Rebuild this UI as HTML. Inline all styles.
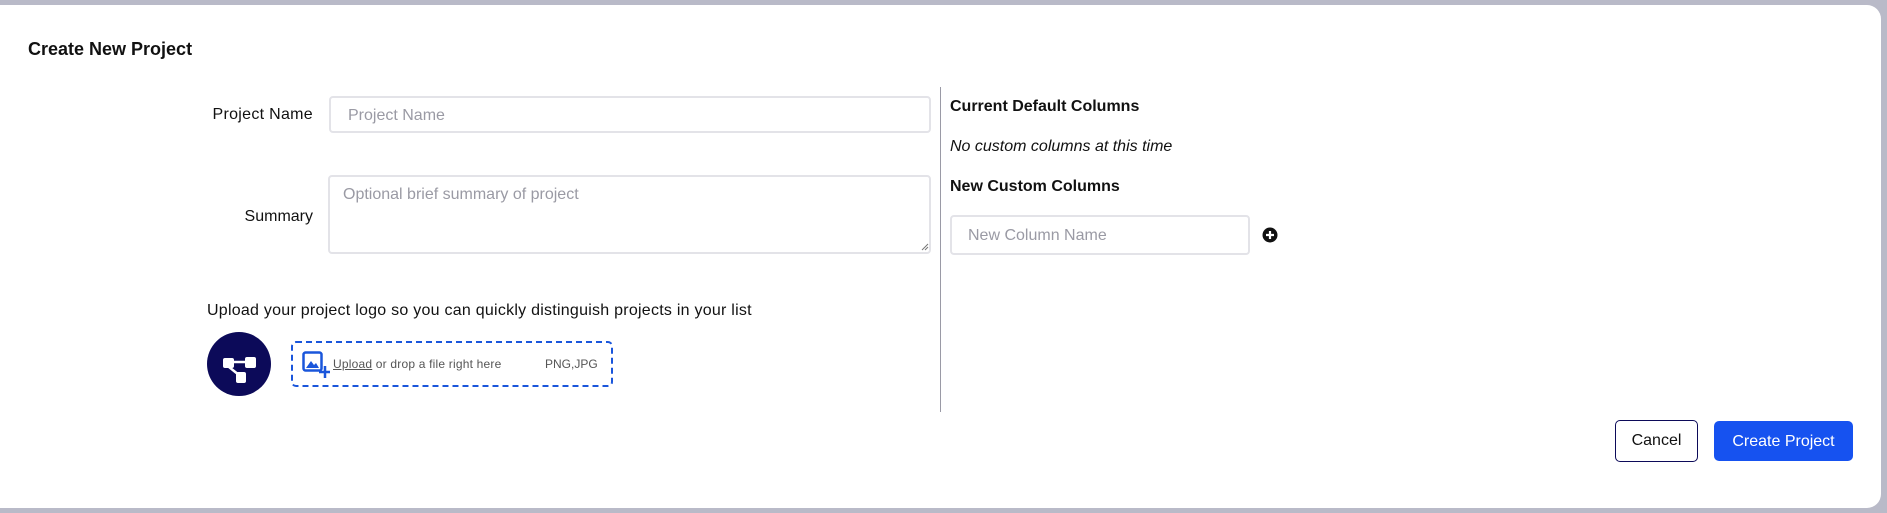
<!DOCTYPE html>
<html><head><style>
*{box-sizing:border-box;margin:0;padding:0}
body{width:1887px;height:513px;background:#b9bac8;position:relative;overflow:hidden;font-family:"Liberation Sans",sans-serif;color:#111}
.modal{position:absolute;left:0;top:5px;width:1881px;height:503px;background:#fff;border-radius:0 14px 14px 0}
.a{position:absolute;white-space:nowrap}
.inp{position:absolute;border:2px solid #e3e3e8;border-radius:4px;background:#fff;color:#9a9aa4;font-size:16px}
</style></head><body>
<div class="modal"></div>
<div class="a" style="left:28px;top:39px;font-size:18px;font-weight:bold">Create New Project</div>
<div class="a" style="right:1574px;top:106px;font-size:16px;letter-spacing:0.3px">Project Name</div>
<div class="inp" style="left:329px;top:96px;width:602px;height:37px;padding:9px 17px">Project Name</div>
<div class="a" style="right:1574px;top:208px;font-size:16px">Summary</div>
<div class="inp" style="left:328px;top:175px;width:603px;height:79px;padding:9px 13px">Optional brief summary of project</div>
<svg class="a" style="left:921px;top:243px" width="8" height="8"><path d="M1 7L7 1M4 7L7 4" stroke="#777" stroke-width="1"/></svg>
<div class="a" style="left:207px;top:302px;font-size:16px;letter-spacing:0.25px">Upload your project logo so you can quickly distinguish projects in your list</div>
<svg class="a" style="left:206px;top:331px" width="66" height="66"><circle cx="33" cy="33" r="32" fill="#0c0a59"/><rect x="17" y="27" width="11" height="10" rx="2" fill="#fff"/><rect x="39" y="26" width="11" height="11" rx="2" fill="#fff"/><rect x="30" y="41" width="10" height="11" rx="2" fill="#fff"/><path d="M27 31H40M23 36L33 44" stroke="#fff" stroke-width="2.5"/></svg>
<div class="a" style="left:291px;top:341px;width:322px;height:46px;border:2px dashed #1a56db;border-radius:5px"></div>
<svg class="a" style="left:302px;top:351px" width="28" height="28"><rect x="1.5" y="1.5" width="18" height="18" rx="2" fill="none" stroke="#1a56db" stroke-width="2.5"/><path d="M4 17L9 10L12 14L14 12L17 17Z" fill="#1a56db"/><path d="M23 15V27M17 21H29" stroke="#1a56db" stroke-width="2.5"/></svg>
<div class="a" style="left:333px;top:357px;font-size:12px;color:#555;letter-spacing:0.2px"><u>Upload</u> or drop a file right here</div>
<div class="a" style="left:545px;top:357px;font-size:12px;color:#555">PNG,JPG</div>
<div class="a" style="left:940px;top:87px;width:1px;height:325px;background:#9a9aa6"></div>
<div class="a" style="left:950px;top:98px;font-size:16px;font-weight:bold">Current Default Columns</div>
<div class="a" style="left:950px;top:138px;font-size:16px;font-style:italic">No custom columns at this time</div>
<div class="a" style="left:950px;top:178px;font-size:16px;font-weight:bold">New Custom Columns</div>
<div class="inp" style="left:950px;top:215px;width:300px;height:40px;padding:10px 16px">New Column Name</div>
<svg class="a" style="left:1262px;top:227px" width="16" height="16"><circle cx="8" cy="8" r="7.5" fill="#111"/><path d="M8 4V12M4 8H12" stroke="#fff" stroke-width="2.2"/></svg>
<div class="a" style="left:1615px;top:420px;width:83px;height:42px;border:1.5px solid #0c0a59;border-radius:5px;font-size:16px;text-align:center;line-height:40px">Cancel</div>
<div class="a" style="left:1714px;top:421px;width:139px;height:40px;background:#1652f0;border-radius:5px;color:#fff;font-size:16px;text-align:center;line-height:41px">Create Project</div>
</body></html>
